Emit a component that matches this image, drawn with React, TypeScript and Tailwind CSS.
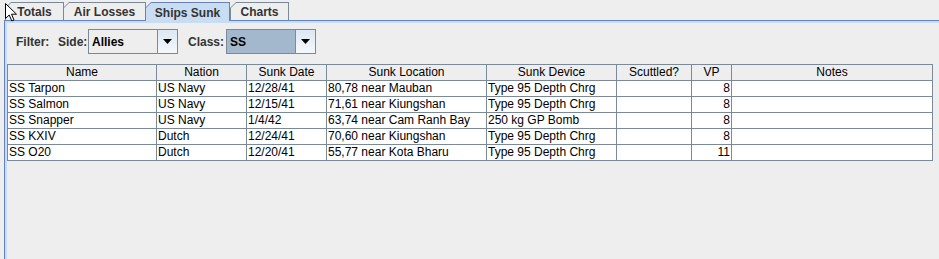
import React from "react";

type Ship = {
  name: string;
  nation: string;
  date: string;
  loc: string;
  device: string;
  scuttled: string;
  vp: string;
  notes: string;
};

const ships: Ship[] = [
  { name: "SS Tarpon", nation: "US Navy", date: "12/28/41", loc: "80,78 near Mauban", device: "Type 95 Depth Chrg", scuttled: "", vp: "8", notes: "" },
  { name: "SS Salmon", nation: "US Navy", date: "12/15/41", loc: "71,61 near Kiungshan", device: "Type 95 Depth Chrg", scuttled: "", vp: "8", notes: "" },
  { name: "SS Snapper", nation: "US Navy", date: "1/4/42", loc: "63,74 near Cam Ranh Bay", device: "250 kg GP Bomb", scuttled: "", vp: "8", notes: "" },
  { name: "SS KXIV", nation: "Dutch", date: "12/24/41", loc: "70,60 near Kiungshan", device: "Type 95 Depth Chrg", scuttled: "", vp: "8", notes: "" },
  { name: "SS O20", nation: "Dutch", date: "12/20/41", loc: "55,77 near Kota Bharu", device: "Type 95 Depth Chrg", scuttled: "", vp: "11", notes: "" },
];

const headers = ["Name", "Nation", "Sunk Date", "Sunk Location", "Sunk Device", "Scuttled?", "VP", "Notes"];

const Tab = ({ label, w, selected }: { label: string; w: string; selected?: boolean }) => {
  if (selected) {
    return (
      <div className={`relative z-10 h-[19px] ${w} bg-[#6382bf] pt-[1px] px-[1px] [clip-path:polygon(6px_0,100%_0,100%_100%,0_100%,0_6px)]`}>
        <div className="h-full bg-[#c8ddf2] [clip-path:polygon(5px_0,100%_0,100%_100%,0_100%,0_5px)] flex items-center justify-center pt-[1px] text-[12px] font-bold text-[#333333]">
          {label}
        </div>
      </div>
    );
  }
  return (
    <div className={`h-[18px] ${w} bg-[#7a8a99] pt-[1px] pl-[1px] pr-[1px] -mr-[1px] [clip-path:polygon(6px_0,100%_0,100%_100%,0_100%,0_6px)]`}>
      <div className="h-full bg-[#eeeeee] [clip-path:polygon(5px_0,100%_0,100%_100%,0_100%,0_5px)] flex items-center justify-center pt-[1px] text-[12px] font-bold text-[#333333]">
        {label}
      </div>
    </div>
  );
};

const Combo = ({ value, focused }: { value: string; focused?: boolean }) => (
  <div className="flex h-[25px] w-[90px] border border-[#7a8a99]">
    <div className={`flex-1 flex items-center pl-[3px] text-[12px] font-bold text-black ${focused ? "bg-[#a3b8cc]" : "bg-[#eeeeee]"}`}>
      {value}
    </div>
    <div className="w-[20px] border-l border-[#7a8a99] bg-gradient-to-b from-[#dde8f3] to-[#f4f8fb] flex items-center justify-center">
      <svg width="9" height="5" viewBox="0 0 9 5">
        <path d="M0 0 H9 L4.5 5 Z" fill="#000" />
      </svg>
    </div>
  </div>
);

const cols = "grid grid-cols-[149px_90px_80px_160px_130px_75px_40px_201px]";

export default function App() {
  return (
    <div className="relative w-[939px] h-[259px] overflow-hidden bg-[#eeeeee] font-['Liberation_Sans',Arial,sans-serif]">
      <div className="h-[20px] pt-[2px] pl-[5px] flex items-start">
        <Tab label="Totals" w="w-[59px]" />
        <Tab label="Air Losses" w="w-[83px]" />
        <Tab label="Ships Sunk" w="w-[85px]" selected />
        <Tab label="Charts" w="w-[59px]" />
      </div>

      <div className="ml-[4px] h-[239px] border-l border-t border-[#6382bf]">
        <div className="h-full border-l-2 border-t-2 border-[#c8ddf2]">
          <div className="mt-[6px] h-[25px] flex items-center pl-[9px] text-[12px] font-bold text-[#333333]">
            <span className="w-[42px]">Filter:</span>
            <span className="w-[30px]">Side:</span>
            <Combo value="Allies" />
            <span className="ml-[10px] w-[38px]">Class:</span>
            <Combo value="SS" focused />
          </div>

          <div className="mt-[10px] w-[926px] border-l border-t border-[#7a8a99] text-[12px] text-black">
            <div className={`${cols} bg-[#eeeeee]`}>
              {headers.map((h) => (
                <div key={h} className="h-[16px] leading-[15px] text-center border-r border-b border-[#7a8a99] truncate">
                  {h}
                </div>
              ))}
            </div>
            {ships.map((s) => (
              <div key={s.name} className={`${cols} bg-white`}>
                <div className="h-[16px] leading-[15px] pl-[1px] border-r border-b border-[#7a8a99] whitespace-nowrap overflow-hidden">{s.name}</div>
                <div className="h-[16px] leading-[15px] pl-[1px] border-r border-b border-[#7a8a99] whitespace-nowrap overflow-hidden">{s.nation}</div>
                <div className="h-[16px] leading-[15px] pl-[1px] border-r border-b border-[#7a8a99] whitespace-nowrap overflow-hidden">{s.date}</div>
                <div className="h-[16px] leading-[15px] pl-[1px] border-r border-b border-[#7a8a99] whitespace-nowrap overflow-hidden">{s.loc}</div>
                <div className="h-[16px] leading-[15px] pl-[1px] border-r border-b border-[#7a8a99] whitespace-nowrap overflow-hidden">{s.device}</div>
                <div className="h-[16px] leading-[15px] pl-[1px] border-r border-b border-[#7a8a99] whitespace-nowrap overflow-hidden">{s.scuttled}</div>
                <div className="h-[16px] leading-[15px] pr-[1px] text-right border-r border-b border-[#7a8a99] whitespace-nowrap overflow-hidden">{s.vp}</div>
                <div className="h-[16px] leading-[15px] pl-[1px] border-r border-b border-[#7a8a99] whitespace-nowrap overflow-hidden">{s.notes}</div>
              </div>
            ))}
          </div>
        </div>
      </div>

      {/* mouse pointer */}
      <svg className="absolute left-[5px] top-[3px]" width="12" height="19" viewBox="0 0 12 19">
        <path d="M0.5 0.5 V15.5 L4.2 12 L6.8 18 L9 17 L6.5 11.2 H11.5 Z" fill="#fff" stroke="#000" strokeWidth="1" strokeLinejoin="miter" />
      </svg>
    </div>
  );
}
